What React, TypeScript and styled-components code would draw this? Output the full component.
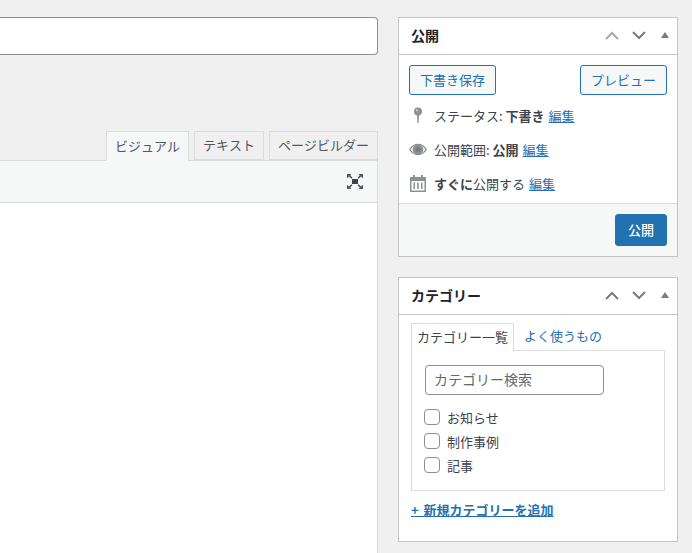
import styled, { createGlobalStyle } from "styled-components";

const GlobalStyle = createGlobalStyle`
  html, body {
    margin: 0;
    padding: 0;
    background: #f0f0f1;
  }
  * {
    box-sizing: border-box;
  }
`;

const Page = styled.div`
  width: 692px;
  height: 553px;
  overflow: hidden;
  display: flex;
  gap: 20px;
  padding-top: 17px;
  background: #f0f0f1;
  color: #3c434a;
  font-family: "Noto Sans CJK JP", "Liberation Sans", sans-serif;
  font-size: 13px;
`;

const Main = styled.div`
  width: 378px;
  flex: none;
  display: flex;
  flex-direction: column;
`;

const TitleInput = styled.input`
  display: block;
  width: 100%;
  height: 38px;
  background: #fff;
  border: 1px solid #8c8f94;
  border-left: none;
  border-radius: 0 4px 4px 0;
  outline: none;
`;

const TabRow = styled.div`
  display: flex;
  justify-content: flex-end;
  align-items: flex-end;
  gap: 5px;
  height: 105px;
  position: relative;
  z-index: 1;
`;

const EditorTab = styled.div<{ $active?: boolean }>`
  height: ${(p) => (p.$active ? "30px" : "29px")};
  margin-bottom: ${(p) => (p.$active ? "-1px" : "0")};
  padding: 0 8px 2px;
  display: flex;
  align-items: center;
  font-size: 13px;
  font-kerning: none;
  line-height: 1;
  color: #50575e;
  background: ${(p) => (p.$active ? "#f6f7f7" : "#f0f0f1")};
  border: 1px solid #dcdcde;
  border-bottom: ${(p) => (p.$active ? "none" : "1px solid #dcdcde")};
`;

const Toolbar = styled.div`
  height: 43px;
  display: flex;
  align-items: center;
  justify-content: flex-end;
  padding-right: 14px;
  background: #f6f7f7;
  border-top: 1px solid #dcdcde;
  border-right: 1px solid #dcdcde;
  border-bottom: 1px solid #dcdcde;
`;

const Editor = styled.div`
  flex: 1;
  background: #fff;
  border-right: 1px solid #dcdcde;
`;

const Side = styled.div`
  width: 280px;
  flex: none;
  display: flex;
  flex-direction: column;
  gap: 20px;
`;

const Box = styled.section`
  background: #fff;
  border: 1px solid #c3c4c7;
`;

const BoxHeader = styled.header`
  height: 37px;
  display: flex;
  align-items: center;
  padding: 0 8px 0 12px;
  border-bottom: 1px solid #c3c4c7;
`;

const BoxTitle = styled.h2`
  flex: 1;
  margin: 0 0 2px;
  font-size: 14px;
  font-weight: 700;
  line-height: 1;
  color: #1d2327;
`;

const Handles = styled.div`
  display: flex;
  align-items: center;
  gap: 13px;
  height: 100%;
  padding-bottom: 2px;
`;

const Actions = styled.div`
  display: flex;
  justify-content: space-between;
  padding: 10px 10px 0;
`;

const OutlineButton = styled.button`
  height: 30px;
  padding: 0 10px 2px;
  background: #f6f7f7;
  border: 1px solid #2271b1;
  border-radius: 3px;
  color: #2271b1;
  font: inherit;
  font-size: 13px;
  line-height: 1;
`;

const Rows = styled.div`
  padding: 3px 0;
`;

const Row = styled.div`
  height: 34px;
  display: flex;
  align-items: center;
  padding-left: 10px;
`;

const RowIcon = styled.span<{ $inset?: number }>`
  width: 25px;
  flex: none;
  display: flex;
  padding-left: ${(p) => p.$inset ?? 0}px;
`;

const RowText = styled.span`
  margin-right: 4px;
  line-height: 1;
  font-size: 13px;
`;

const EditLink = styled.a`
  color: #2271b1;
  text-decoration: underline;
  line-height: 1;
`;

const PublishFooter = styled.div`
  height: 53px;
  display: flex;
  justify-content: flex-end;
  align-items: center;
  padding-right: 10px;
  background: #f6f7f7;
  border-top: 1px solid #dcdcde;
`;

const PrimaryButton = styled.button`
  width: 52px;
  height: 32px;
  padding: 0 0 2px;
  background: #2271b1;
  border: 1px solid #2271b1;
  border-radius: 3px;
  color: #fff;
  font: inherit;
  font-size: 13px;
  font-weight: 500;
  line-height: 1;
`;

const CategoryBody = styled.div`
  padding: 8px 12px 0;
  height: 226px;
`;

const CatTabs = styled.div`
  display: flex;
  height: 28px;
  position: relative;
  z-index: 1;
`;

const CatTab = styled.div<{ $active?: boolean }>`
  height: ${(p) => (p.$active ? "28px" : "27px")};
  display: flex;
  align-items: center;
  padding: 0 ${(p) => (p.$active ? "5px" : "10px")} 2px;
  font-size: 13px;
  line-height: 1;
  color: ${(p) => (p.$active ? "#3c434a" : "#2271b1")};
  background: #fff;
  border: ${(p) => (p.$active ? "1px solid #dcdcde" : "none")};
  border-bottom: none;
`;

const CatPanel = styled.div`
  height: 141px;
  margin-top: -1px;
  padding: 14px 13px 0;
  border: 1px solid #dcdcde;
`;

const SearchInput = styled.input`
  display: block;
  width: 179px;
  height: 30px;
  padding: 0 8px 2px;
  background: #fff;
  border: 1px solid #8c8f94;
  border-radius: 4px;
  outline: none;
  font: inherit;
  font-size: 14px;
  color: #3c434a;
  &::placeholder {
    color: #646970;
    opacity: 1;
  }
`;

const CheckList = styled.ul`
  list-style: none;
  margin: 10px 0 0 -1px;
  padding: 0;
`;

const CheckItem = styled.li`
  height: 24px;
  display: flex;
  align-items: center;
  gap: 7px;
  font-size: 13px;
  line-height: 1;
`;

const CheckBox = styled.input`
  appearance: none;
  width: 16px;
  height: 16px;
  margin: 0;
  flex: none;
  background: #fff;
  border: 1px solid #8c8f94;
  border-radius: 4px;
`;

const AddLink = styled.a`
  display: inline-block;
  margin-top: 11px;
  color: #2271b1;
  font-size: 13px;
  font-weight: 700;
  line-height: 1.3;
  word-spacing: 2px;
  text-decoration: underline;
`;

const TriangleMark = styled.svg`
  margin-left: 2px;
`;

function Chevron({ up, color }: { up?: boolean; color: string }) {
  return (
    <svg width="14" height="9" viewBox="0 0 14 9" fill="none">
      <path
        d={up ? "M1 8L7 2l6 6" : "M1 1l6 6 6-6"}
        stroke={color}
        strokeWidth="2"
      />
    </svg>
  );
}

function BoxHandles({ upColor }: { upColor: string }) {
  return (
    <Handles>
      <Chevron up color={upColor} />
      <Chevron color="#787c82" />
      <TriangleMark width="8" height="6" viewBox="0 0 8 6">
        <path d="M4 0l4 6H0z" fill="#787c82" />
      </TriangleMark>
    </Handles>
  );
}

function PinIcon() {
  return (
    <svg width="10" height="16" viewBox="0 0 10 16">
      <circle cx="5" cy="4.5" r="4" fill="#8c8f94" />
      <path d="M4 8h2l-.4 8h-1.200z" fill="#8c8f94" />
      <circle cx="3.800" cy="3.200" r="1" fill="#dcdcde" />
    </svg>
  );
}

function EyeIcon() {
  return (
    <svg width="18" height="13" viewBox="0 0 19 13">
      <path
        d="M0 6.500C2.400 2.400 5.700.5 9.500.5S16.600 2.400 19 6.500c-2.400 4.100-5.700 6-9.500 6S2.400 10.600 0 6.500z"
        fill="#8c8f94"
      />
      <path
        d="M1.800 6.500C3.300 4 5 2.600 6.600 2a5 5 0 0 0 0 9C5 10.400 3.300 9 1.800 6.500zM12.400 2c1.600.6 3.300 2 4.800 4.500-1.500 2.500-3.200 3.900-4.800 4.500a5 5 0 0 0 0-9z"
        fill="#fff"
      />
      <circle cx="9.500" cy="6.500" r="2.600" fill="#787c82" />
    </svg>
  );
}

function CalendarIcon() {
  return (
    <svg width="16" height="18" viewBox="0 0 16 18">
      <path d="M0 3h3V1h2v2h6V1h2v2h3v15H0z" fill="#8c8f94" />
      <rect x="1.500" y="7" width="13" height="9.500" fill="#fff" />
      <path d="M3.500 8.500h1.500v6.500H3.500zM7.200 8.500h1.500v6.500H7.200zM11 8.500h1.500v6.500H11z" fill="#8c8f94" />
    </svg>
  );
}

function ExpandIcon() {
  return (
    <svg width="16" height="15" viewBox="0 0 16 15">
      <rect x="5" y="5" width="6" height="5" fill="#3c434a" />
      <path
        d="M0 0h4.500L3.200 1.300 5.500 3.800 4.300 4.800 2 2.500.0 4.300zM16 0h-4.500l1.300 1.300-2.300 2.500 1.200 1L14 2.500l2 1.800zM0 15h4.500l-1.300-1.300 2.300-2.500-1.200-1L2 12.500 0 10.700zM16 15h-4.500l1.300-1.300-2.300-2.500 1.200-1 2.300 2.300 2-1.800z"
        fill="#50575e"
      />
    </svg>
  );
}

export default function App() {
  return (
    <>
      <GlobalStyle />
      <Page>
        <Main>
          <TitleInput />
          <TabRow>
            <EditorTab $active>ビジュアル</EditorTab>
            <EditorTab>テキスト</EditorTab>
            <EditorTab>ページビルダー</EditorTab>
          </TabRow>
          <Toolbar>
            <ExpandIcon />
          </Toolbar>
          <Editor />
        </Main>
        <Side>
          <Box>
            <BoxHeader>
              <BoxTitle>公開</BoxTitle>
              <BoxHandles upColor="#a7aaad" />
            </BoxHeader>
            <Actions>
              <OutlineButton>下書き保存</OutlineButton>
              <OutlineButton>プレビュー</OutlineButton>
            </Actions>
            <Rows>
              <Row>
                <RowIcon $inset={4}>
                  <PinIcon />
                </RowIcon>
                <RowText>
                  ステータス: <b>下書き</b>
                </RowText>
                <EditLink>編集</EditLink>
              </Row>
              <Row>
                <RowIcon>
                  <EyeIcon />
                </RowIcon>
                <RowText>
                  公開範囲: <b>公開</b>
                </RowText>
                <EditLink>編集</EditLink>
              </Row>
              <Row>
                <RowIcon $inset={1}>
                  <CalendarIcon />
                </RowIcon>
                <RowText>
                  <b>すぐに</b>公開する
                </RowText>
                <EditLink>編集</EditLink>
              </Row>
            </Rows>
            <PublishFooter>
              <PrimaryButton>公開</PrimaryButton>
            </PublishFooter>
          </Box>
          <Box>
            <BoxHeader>
              <BoxTitle>カテゴリー</BoxTitle>
              <BoxHandles upColor="#787c82" />
            </BoxHeader>
            <CategoryBody>
              <CatTabs>
                <CatTab $active>カテゴリー一覧</CatTab>
                <CatTab>よく使うもの</CatTab>
              </CatTabs>
              <CatPanel>
                <SearchInput placeholder="カテゴリー検索" />
                <CheckList>
                  <CheckItem>
                    <CheckBox type="checkbox" />
                    お知らせ
                  </CheckItem>
                  <CheckItem>
                    <CheckBox type="checkbox" />
                    制作事例
                  </CheckItem>
                  <CheckItem>
                    <CheckBox type="checkbox" />
                    記事
                  </CheckItem>
                </CheckList>
              </CatPanel>
              <AddLink>+ 新規カテゴリーを追加</AddLink>
            </CategoryBody>
          </Box>
        </Side>
      </Page>
    </>
  );
}
